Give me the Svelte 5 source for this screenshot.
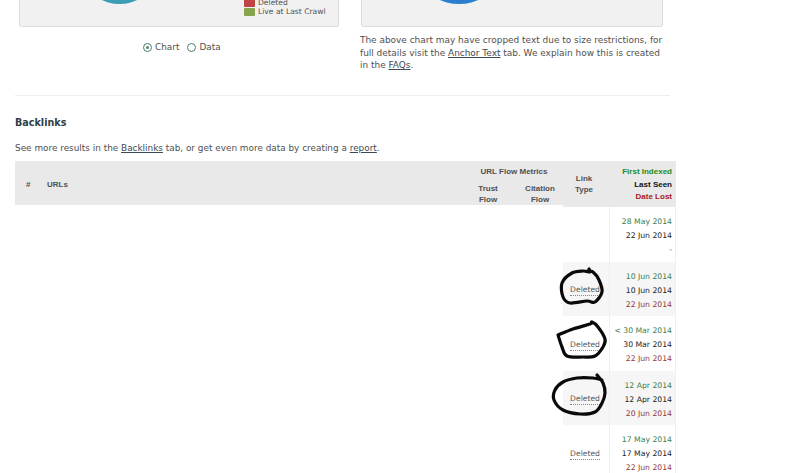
<script>
  // turns hand-traced points into a smooth pen stroke
  const smooth = (pts) => {
    let d = `M${pts[0][0]} ${pts[0][1]}`;
    for (let i = 0; i < pts.length - 1; i++) {
      const p0 = pts[i - 1] || pts[i];
      const p1 = pts[i];
      const p2 = pts[i + 1];
      const p3 = pts[i + 2] || p2;
      const c1 = [p1[0] + (p2[0] - p0[0]) / 6, p1[1] + (p2[1] - p0[1]) / 6];
      const c2 = [p2[0] - (p3[0] - p1[0]) / 6, p2[1] - (p3[1] - p1[1]) / 6];
      d += ` C${c1[0]} ${c1[1]} ${c2[0]} ${c2[1]} ${p2[0]} ${p2[1]}`;
    }
    return d;
  };

  const rows = [
    { type: "", first: "28 May 2014", seen: "22 Jun 2014", lost: "-" },
    {
      type: "Deleted", first: "10 Jun 2014", seen: "10 Jun 2014", lost: "22 Jun 2014", alt: true,
      mark: [[36, 2], [37, 5], [30, 4], [19, 6], [9, 16], [10, 30], [17, 36], [34, 34], [42, 35], [49, 25], [46, 13], [40, 5], [35, 4]]
    },
    {
      type: "Deleted", first: "< 30 Mar 2014", seen: "30 Mar 2014", lost: "22 Jun 2014",
      mark: [[5, 14], [20, 8], [37, 3], [39, 1], [45, 6], [52, 18], [50, 26], [42, 35], [30, 36], [14, 35], [9, 26], [5, 14]]
    },
    {
      type: "Deleted", first: "12 Apr 2014", seen: "12 Apr 2014", lost: "20 Jun 2014", alt: true,
      mark: [[44, -1], [50, 7], [52, 17], [49, 27], [42, 36], [27, 38], [10, 34], [1, 24], [2, 14], [10, 6], [24, 2], [40, 2], [49, 4]]
    },
    { type: "Deleted", first: "17 May 2014", seen: "17 May 2014", lost: "22 Jun 2014" }
  ];
</script>

<div class="page">
  <div class="charts">
    <div class="col-left">
      <div class="panel">
        <div class="pie teal"></div>
        <div class="legend">
          <div class="legend-item"><span class="swatch red"></span>Deleted</div>
          <div class="legend-item"><span class="swatch green"></span>Live at Last Crawl</div>
        </div>
      </div>
      <div class="radios">
        <span class="radio on"></span><span class="radio-label">Chart</span>
        <span class="radio"></span><span class="radio-label">Data</span>
      </div>
    </div>
    <div class="col-right">
      <div class="panel">
        <div class="pie blue"></div>
      </div>
      <p class="note">The above chart may have cropped text due to size restrictions, for full details visit the <a href="#anchor">Anchor Text</a> tab. We explain how this is created in the <a href="#faq">FAQs</a>.</p>
    </div>
  </div>

  <hr />

  <h2>Backlinks</h2>
  <p class="intro">See more results in the <a href="#backlinks">Backlinks</a> tab, or get even more data by creating a <a href="#report">report</a>.</p>

  <div class="table">
    <div class="head">
      <div class="head-main">
        <span class="hash">#</span>
        <span class="urls">URLs</span>
        <div class="metrics">
          <div class="metrics-title">URL Flow Metrics</div>
          <div class="metrics-cols">
            <span>Trust<br />Flow</span>
            <span>Citation<br />Flow</span>
          </div>
        </div>
      </div>
      <div class="head-type">Link<br />Type</div>
      <div class="head-dates">
        <span class="first">First Indexed</span>
        <span class="seen">Last Seen</span>
        <span class="lost">Date Lost</span>
      </div>
    </div>

    {#each rows as row}
      <div class="row">
        <div class="cell-type" class:alt={row.alt}>
          {#if row.type}<span class="deleted">{row.type}</span>{/if}
          {#if row.mark}
            <svg class="scribble" viewBox="0 0 54 44" width="54" height="44" aria-hidden="true">
              <path d={smooth(row.mark)} />
            </svg>
          {/if}
        </div>
        <div class="cell-dates" class:alt={row.alt}>
          <span class="first-date">{row.first}</span>
          <span class="seen-date">{row.seen}</span>
          <span class="lost-date" class:dash={row.lost === "-"}>{row.lost}</span>
        </div>
      </div>
    {/each}
  </div>
</div>

<style>
  :global(body) {
    margin: 0;
    background: #fff;
  }

  .page {
    width: 800px;
    height: 473px;
    overflow: hidden;
    font-family: "DejaVu Sans", Verdana, sans-serif;
    font-size: 8.9px;
    color: #505050;
    box-sizing: border-box;
    padding-left: 15px;
  }

  a {
    color: #3c4a55;
    text-decoration: underline;
  }

  .charts {
    display: flex;
    height: 95px;
    padding-left: 4px;
    gap: 22px;
  }

  .col-left {
    width: 320px;
  }

  .col-right {
    width: 302px;
  }

  .panel {
    position: relative;
    height: 27px;
    box-sizing: border-box;
    background: #f1f1f1;
    border: 1px solid #dcdcdc;
    border-top: none;
    border-radius: 0 0 3px 3px;
    overflow: hidden;
  }

  .pie {
    position: absolute;
    top: -36px;
    height: 40px;
    border-radius: 50%;
  }

  .teal {
    left: 70px;
    width: 59px;
    background: #3d9db5;
  }

  .blue {
    left: 65px;
    width: 64px;
    background: #2a80cf;
  }

  .legend {
    position: absolute;
    left: 224px;
    top: -2px;
    font-size: 7.6px;
    line-height: 10px;
  }

  .legend-item {
    display: flex;
    align-items: center;
    gap: 3px;
    height: 10px;
    margin-bottom: -1px;
    white-space: nowrap;
  }

  .swatch {
    width: 11px;
    height: 8px;
    border-radius: 1px;
  }

  .red {
    background: #c04444;
  }

  .green {
    background: #86a44a;
  }

  .radios {
    display: flex;
    align-items: center;
    padding: 15px 0 0 124px;
    height: 10px;
  }

  .radio {
    width: 7px;
    height: 7px;
    border: 1px solid #4d7d68;
    border-radius: 50%;
    position: relative;
  }

  .radio.on::after {
    content: "";
    position: absolute;
    left: 2px;
    top: 2px;
    width: 3px;
    height: 3px;
    border-radius: 50%;
    background: #4d8a6c;
  }

  .radio-label {
    margin: 0 8px 0 3px;
  }

  .note {
    margin: 7px 0 0 -1px;
    width: 306px;
    font-size: 8.95px;
    line-height: 12.5px;
  }

  hr {
    margin: 0;
    width: 655px;
    border: none;
    border-top: 1px solid #eee;
  }

  h2 {
    margin: 20px 0 0;
    font-size: 9.6px;
    line-height: 13px;
    font-weight: bold;
    color: #2f3f47;
  }

  .intro {
    margin: 13px 0 0;
    line-height: 12px;
  }

  .table {
    margin-top: 7px;
    width: 661px;
  }

  .head {
    display: flex;
    font-family: "Liberation Sans", Arial, sans-serif;
    font-size: 8px;
    font-weight: bold;
  }

  .head-main {
    width: 548px;
    height: 44px;
    padding-top: 2px;
    box-sizing: border-box;
    background: #e9e9e9;
    position: relative;
    display: flex;
    align-items: center;
  }

  .hash {
    margin-left: 11px;
    width: 21px;
  }

  .metrics {
    position: absolute;
    left: 451px;
    top: 6px;
    width: 96px;
    text-align: center;
  }

  .metrics-cols {
    display: flex;
    justify-content: space-between;
    margin-top: 8px;
    line-height: 10.5px;
  }

  .metrics-cols span {
    width: 44px;
  }

  .head-type {
    width: 46px;
    height: 46px;
    box-sizing: border-box;
    background: #e9e9e9;
    text-align: center;
    padding: 13px 4px 0 0;
    line-height: 10.5px;
  }

  .head-dates {
    width: 67px;
    height: 46px;
    box-sizing: border-box;
    background: #e9e9e9;
    display: flex;
    flex-direction: column;
    align-items: flex-end;
    padding: 5px 4px 0 0;
    line-height: 12.5px;
  }

  .first {
    color: #1f8a1f;
  }

  .seen {
    color: #111;
  }

  .lost {
    color: #a81818;
  }

  .row {
    display: flex;
    margin-left: 548px;
    height: 54.5px;
  }

  .cell-type {
    position: relative;
    width: 46px;
    box-sizing: border-box;
    display: flex;
    align-items: center;
    justify-content: center;
    padding: 4px 2px 0 0;
    font-size: 7.6px;
  }

  .cell-dates {
    width: 67px;
    box-sizing: border-box;
    border-left: 1px solid #f0f0f0;
    border-right: 1px solid #f0f0f0;
    display: flex;
    flex-direction: column;
    align-items: flex-end;
    justify-content: center;
    padding: 4px 3px 0 0;
    font-size: 7.7px;
    line-height: 14px;
    white-space: nowrap;
  }

  .alt {
    background: #f6f6f6;
  }

  .deleted {
    color: #555;
    border-bottom: 1px dotted #888;
    line-height: 10px;
  }

  .first-date {
    color: #3d7d4a;
  }

  .seen-date {
    color: #222;
  }

  .lost-date {
    color: #8f3a3a;
  }

  .lost-date.dash {
    color: #667;
  }

  .scribble {
    position: absolute;
    left: -10px;
    top: 5px;
    overflow: visible;
    pointer-events: none;
  }

  .scribble path {
    fill: none;
    stroke: #0a0a0a;
    stroke-width: 3.2;
    stroke-linecap: round;
    stroke-linejoin: round;
  }
</style>
